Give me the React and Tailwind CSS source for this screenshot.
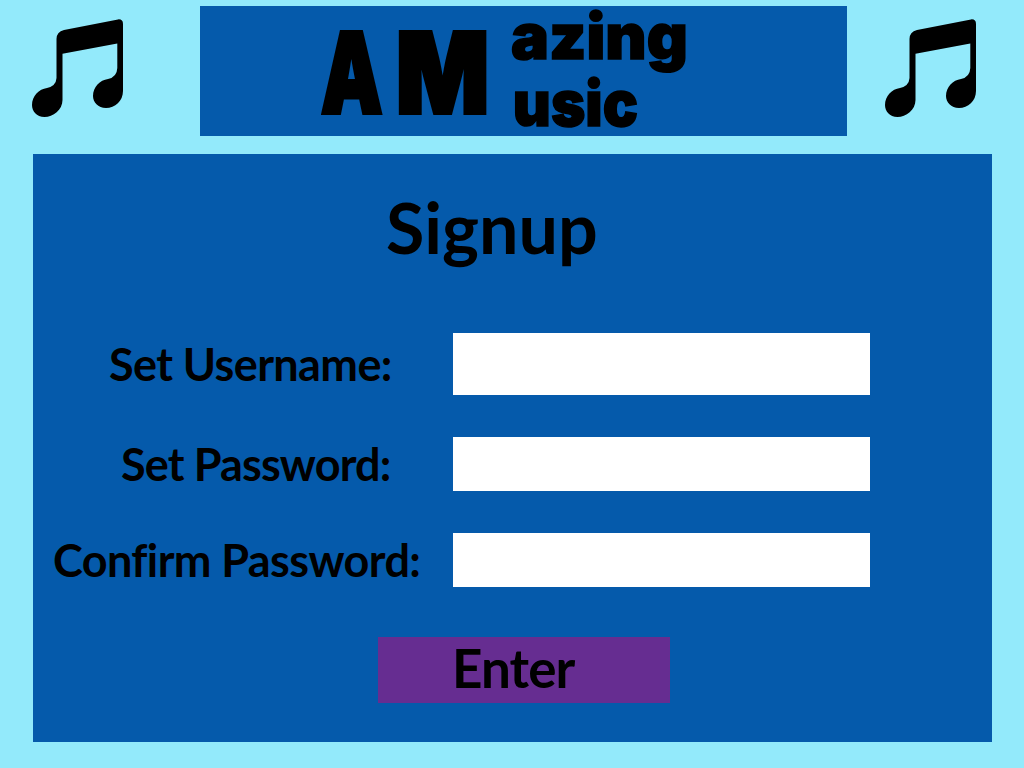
function MusicNote({ className }) {
  return (
    <svg viewBox="0 0 92 99" className={className} fill="#000" aria-hidden="true">
      <path d="M32 11 86 0.4Q91 0 91 5V72C91 82 83 89 74 89C66 89 61 83 61 77C61 68 68 61 76 60Q85 58 85.300 49V24.500L30.500 34.700V81C30.500 91 21 98 12.500 98C4.500 98 0 92 0 86C0 77 7 70 15 69Q24 67 24.500 59V20Q24.500 13 32 11Z" />
    </svg>
  );
}

function Field({ id, label, type, labelClass, inputClass }) {
  return (
    <div className="flex items-center">
      <label htmlFor={id} className="w-[420px] shrink-0 whitespace-nowrap text-[45px] leading-none">
        <span className={labelClass}>{label}</span>
      </label>
      <input id={id} type={type} className={inputClass} />
    </div>
  );
}

export default function App() {
  return (
    <div className="flex h-[768px] w-[1024px] flex-col overflow-hidden bg-[#93eafb] font-['Lato',sans-serif] font-bold text-black">
      <header className="flex h-[154px] shrink-0 items-start pt-[6px]">
        <MusicNote className="ml-[32px] mt-[13px] h-[99px] w-[92px] shrink-0" />
        <div className="ml-[76px] flex h-[130px] w-[647px] shrink-0 bg-[#055aab] font-['Inter',sans-serif] font-black">
          <div className="ml-[121px] mt-[9px] flex w-[190px] shrink-0 text-[112px] leading-[115px] [-webkit-text-stroke:4px_#000]">
            <span className="inline-block w-[75px] origin-left scale-x-[0.69]">A</span>
            <span className="inline-block w-[115px] origin-left scale-x-[0.87]">M</span>
          </div>
          <div className="-mt-[3px] flex flex-col text-[63px] leading-[67px] [-webkit-text-stroke:1.5px_#000]">
            <span className="w-[175px] origin-left scale-x-[1.01]">azing</span>
            <span className="w-[175px] origin-left scale-x-[0.93] pl-[2px]">usic</span>
          </div>
        </div>
        <MusicNote className="ml-[38px] mt-[13px] h-[99px] w-[92px] shrink-0" />
      </header>

      <main className="ml-[33px] flex h-[588px] w-[959px] shrink-0 flex-col bg-[#055aab]">
        <h1 className="ml-[353px] mt-[38px] h-[70px] text-[70px] leading-none">Signup</h1>
        <form className="mt-[71px] flex flex-col items-start" onSubmit={(e) => e.preventDefault()}>
          <Field
            id="username"
            label="Set Username:"
            type="text"
            labelClass="ml-[76px] tracking-[-0.6px]"
            inputClass="h-[62px] w-[417px] bg-white px-3 text-3xl outline-none"
          />
          <div className="mt-[42px]">
            <Field
              id="password"
              label="Set Password:"
              type="password"
              labelClass="ml-[88px] tracking-[-0.85px]"
              inputClass="h-[54px] w-[417px] bg-white px-3 text-3xl outline-none"
            />
          </div>
          <div className="mt-[42px]">
            <Field
              id="confirm"
              label="Confirm Password:"
              type="password"
              labelClass="ml-[20px] tracking-[-0.6px]"
              inputClass="h-[54px] w-[417px] bg-white px-3 text-3xl outline-none"
            />
          </div>
          <button
            type="submit"
            className="ml-[345px] mt-[50px] flex h-[66px] w-[292px] items-start bg-[#662d91] pl-[74px] pt-[4px] text-[53px] leading-none tracking-[-0.9px]"
          >
            Enter
          </button>
        </form>
      </main>
    </div>
  );
}
